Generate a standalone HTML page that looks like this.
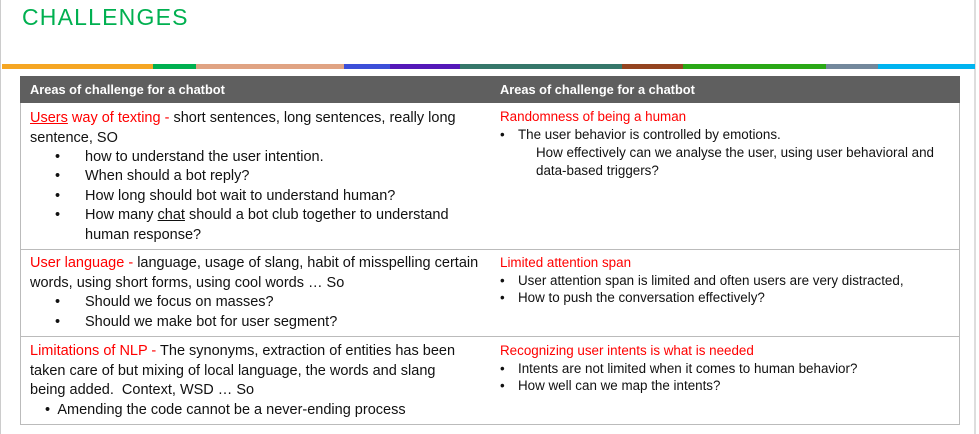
<!DOCTYPE html>
<html><head><meta charset="utf-8"><style>
html,body{margin:0;padding:0;}
body{width:979px;height:434px;background:#fff;position:relative;overflow:hidden;font-family:"Liberation Sans",sans-serif;}
.t{position:absolute;white-space:nowrap;color:#111;}
.l{font-size:14.5px;}
.r{font-size:13.4px;}
.red{color:#f00;}
.bar{position:absolute;top:64px;height:5px;}
.hl{position:absolute;height:1px;background:#bbb;left:20px;width:940px;}
</style></head><body>
<div style="position:absolute;left:0;top:0;width:1px;height:434px;background:#ccc"></div>
<div style="position:absolute;left:974px;top:0;width:2px;height:434px;background:#ddd"></div>
<div class="t" style="left:22px;top:4px;font-size:23px;color:#00b050;letter-spacing:1.2px;">CHALLENGES</div>
<div class="bar" style="left:2px;width:151px;background:#f5a623"></div>
<div class="bar" style="left:153px;width:43px;background:#00b050"></div>
<div class="bar" style="left:196px;width:148px;background:#e0a383"></div>
<div class="bar" style="left:344px;width:46px;background:#3c4fd8"></div>
<div class="bar" style="left:390px;width:70px;background:#5418b8"></div>
<div class="bar" style="left:460px;width:162px;background:#36776a"></div>
<div class="bar" style="left:622px;width:61px;background:#944420"></div>
<div class="bar" style="left:683px;width:143px;background:#2aa816"></div>
<div class="bar" style="left:826px;width:52px;background:#73889c"></div>
<div class="bar" style="left:878px;width:97px;background:#00b4f0"></div>

<div style="position:absolute;left:20px;top:76px;width:940px;height:27px;background:#5f5f5f"></div>
<div class="t" style="left:30px;top:82px;color:#fff;font-size:12.8px;font-weight:bold;">Areas of challenge for a chatbot</div>
<div class="t" style="left:500px;top:82px;color:#fff;font-size:12.8px;font-weight:bold;">Areas of challenge for a chatbot</div>
<div style="position:absolute;left:20px;top:103px;width:1px;height:322px;background:#bbb"></div>
<div style="position:absolute;left:959px;top:103px;width:1px;height:322px;background:#bbb"></div>
<div class="hl" style="top:249px"></div>
<div class="hl" style="top:336px"></div>
<div class="hl" style="top:424px"></div>

<div class="t l" style="left:30px;top:110px"><span class="red"><u>Users</u> way of texting - </span>short sentences, long sentences, really long</div>
<div class="t l" style="left:30px;top:130px">sentence, SO</div>
<div class="t l" style="left:55px;top:149px">•</div><div class="t l" style="left:85px;top:149px">how to understand the user intention.</div>
<div class="t l" style="left:55px;top:168px">•</div><div class="t l" style="left:85px;top:168px">When should a bot reply?</div>
<div class="t l" style="left:55px;top:188px">•</div><div class="t l" style="left:85px;top:188px">How long should bot wait to understand human?</div>
<div class="t l" style="left:55px;top:207px">•</div><div class="t l" style="left:85px;top:207px">How many <u>chat</u> should a bot club together to understand</div>
<div class="t l" style="left:85px;top:227px">human response?</div>

<div class="t l" style="left:30px;top:255px"><span class="red">User language - </span>language, usage of slang, habit of misspelling certain</div>
<div class="t l" style="left:30px;top:275px">words, using short forms, using cool words … So</div>
<div class="t l" style="left:55px;top:294px">•</div><div class="t l" style="left:85px;top:294px">Should we focus on masses?</div>
<div class="t l" style="left:55px;top:314px">•</div><div class="t l" style="left:85px;top:314px">Should we make bot for user segment?</div>

<div class="t l" style="left:30px;top:343px"><span class="red">Limitations of NLP - </span>The synonyms, extraction of entities has been</div>
<div class="t l" style="left:30px;top:363px">taken care of but mixing of local language, the words and slang</div>
<div class="t l" style="left:30px;top:382px">being added.&nbsp; Context, WSD … So</div>
<div class="t l" style="left:45px;top:402px">•&nbsp; Amending the code cannot be a never-ending process</div>

<div class="t r red" style="left:500px;top:109px">Randomness of being a human</div>
<div class="t r" style="left:500px;top:127px">•</div><div class="t r" style="left:518px;top:127px">The user behavior is controlled by emotions.</div>
<div class="t r" style="left:536px;top:145px">How effectively can we analyse the user, using user behavioral and</div>
<div class="t r" style="left:536px;top:163px">data-based triggers?</div>

<div class="t r red" style="left:500px;top:255px">Limited attention span</div>
<div class="t r" style="left:500px;top:273px">•</div><div class="t r" style="left:518px;top:273px">User attention span is limited and often users are very distracted,</div>
<div class="t r" style="left:500px;top:290px">•</div><div class="t r" style="left:518px;top:290px">How to push the conversation effectively?</div>

<div class="t r red" style="left:500px;top:343px">Recognizing user intents is what is needed</div>
<div class="t r" style="left:500px;top:361px">•</div><div class="t r" style="left:518px;top:361px">Intents are not limited when it comes to human behavior?</div>
<div class="t r" style="left:500px;top:378px">•</div><div class="t r" style="left:518px;top:378px">How well can we map the intents?</div>
</body></html>
